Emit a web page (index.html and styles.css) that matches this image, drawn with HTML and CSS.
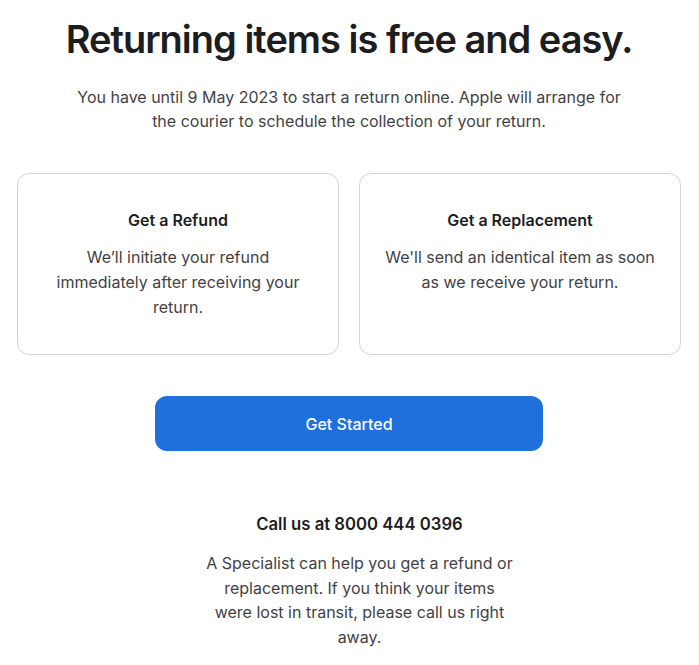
FILE: index.html
```html
<!DOCTYPE html>
<html lang="en">
<head>
  <meta charset="UTF-8" />
  <title>Returning items is free and easy</title>
  <link rel="stylesheet" href="styles.css">
</head>
<body>
  <main class="returns">
    <h1>Returning items is free and easy.</h1>
    <p class="intro">You have until 9 May 2023 to start a return online. Apple will arrange for the courier to schedule the collection of your return.</p>

    <!-- options -->
    <div class="options">
      <div class="option-card">
        <h3>Get a Refund</h3>
        <p>We’ll initiate your refund immediately after receiving your return.</p>
      </div>
      <div class="option-card">
        <h3>Get a Replacement</h3>
        <p>We'll send an identical item as soon as we receive your return.</p>
      </div>
    </div>

    <button type="button" class="start-btn">Get Started</button>

    <div class="call-us">
      <h3>Call us at 8000 444 0396</h3>
      <p>A Specialist can help you get a refund or replacement. If you think your items were lost in transit, please call us right away.</p>
    </div>
  </main>
</body>
</html>
```

FILE: styles.css
```css
body {
  margin: 0;
  background: #fff;
  font-family: "Inter", "Liberation Sans", sans-serif;
  color: #1d1d1f;
}

.returns {
  padding: 15px 18px 0 17px;
  display: flex;
  flex-direction: column;
  align-items: center;
  text-align: center;
}

h1 {
  margin: 0;
  font-size: 38px;
  line-height: 48px;
  font-weight: 600;
  letter-spacing: -1px;
}

.intro {
  margin: 22px 0 0;
  max-width: 560px;
  font-size: 16px;
  line-height: 24px;
  color: #424245;
}

.options {
  margin-top: 40px;
  width: 100%;
  display: grid;
  grid-template-columns: 1fr 1fr;
  gap: 20px;
}

.option-card {
  border: 1px solid #d2d2d7;
  border-radius: 12px;
  padding: 34px 24px;
}

.option-card h3,
.call-us h3 {
  margin: 0;
  font-size: 16px;
  line-height: 24px;
  font-weight: 600;
}

.option-card p {
  margin: 13px 0 0;
  font-size: 16px;
  line-height: 25px;
  color: #424245;
}

.start-btn {
  margin-top: 41px;
  width: 388px;
  height: 55px;
  border: none;
  border-radius: 12px;
  background: #1f6fdc;
  color: #fff;
  font-family: inherit;
  font-size: 16px;
  font-weight: 500;
}

.call-us {
  margin: 61px 0 0 21px;
  width: 310px;
}

.call-us h3 {
  font-size: 16.7px;
}

.call-us p {
  margin: 15px 0 0;
  font-size: 16px;
  line-height: 24.7px;
  color: #424245;
}
```
